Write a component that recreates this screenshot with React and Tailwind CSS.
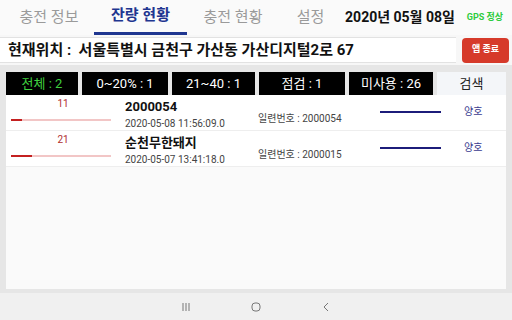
import React from "react";

const rows = [
  { pct: 11, name: "2000054", date: "2020-05-08 11:56:09.0", serial: "2000054" },
  { pct: 21, name: "순천무한돼지", date: "2020-05-07 13:41:18.0", serial: "2000015" },
];

export default function App() {
  return (
    <div
      className="w-[512px] h-[320px] flex flex-col bg-[#e6e6e6] overflow-hidden"
      style={{ fontFamily: 'Roboto, "Noto Sans CJK KR", sans-serif' }}
    >
      {/* top tabs */}
      <div className="h-[35px] bg-[#fafafa] flex items-stretch">
        <div className="w-[94px] flex items-center justify-center text-[15px] text-[#9a9a9a] pl-[4px]">충전 정보</div>
        <div className="w-[93px] flex flex-col items-center justify-end">
          <div className="text-[15px] font-bold text-[#1f3690] leading-none mb-[9px]">잔량 현황</div>
          <div className="w-full h-[3px] bg-[#1f3690]" />
        </div>
        <div className="w-[92px] flex items-center justify-center text-[15px] text-[#9a9a9a]">충전 현황</div>
        <div className="w-[63px] flex items-center justify-center text-[15px] text-[#9a9a9a]">설정</div>
        <div className="w-[116px] flex items-center justify-center text-[14px] font-bold text-[#111]">2020년 05월 08일</div>
        <div className="flex-1 flex items-center justify-center text-[9px] font-bold text-[#2ecc40]">GPS 정상</div>
      </div>
      {/* address */}
      <div className="h-[30px] bg-[#f7f7f7] flex items-center">
        <div className="w-[456px] h-[26px] bg-white border-y border-[#e2e2e2] flex items-center pl-[8px] text-[15px] font-bold text-[#111]">
          현재위치 :&nbsp; 서울특별시 금천구 가산동 가산디지털2로 67
        </div>
        <div className="ml-[6px] w-[47px] h-[25px] bg-[#d63a2a] rounded-[4px] flex items-center justify-center text-[9px] text-white font-bold">
          앱 종료
        </div>
      </div>
      {/* main */}
      <div className="flex-1 px-[6px] pt-[7px] pb-[4px] flex flex-col">
        <div className="flex-1 bg-[#fafafa] flex flex-col">
          <div className="h-[23px] flex gap-[4px] bg-[#e6e6e6]">
            <div className="w-[72px] bg-black text-[#3fcf3f] text-[13px] flex items-center justify-center">전체 : 2</div>
            <div className="w-[86px] bg-black text-white text-[13px] flex items-center justify-center">0~20% : 1</div>
            <div className="w-[83px] bg-black text-white text-[13px] flex items-center justify-center">21~40 : 1</div>
            <div className="w-[86px] bg-black text-white text-[13px] flex items-center justify-center">점검 : 1</div>
            <div className="w-[84px] bg-black text-white text-[13px] flex items-center justify-center">미사용 : 26</div>
            <div className="flex-1 bg-[#f4f6f9] text-[#222] text-[13px] flex items-center justify-center">검색</div>
          </div>
          {rows.map((r, i) => (
            <div key={i} className="h-[36px] bg-white border-b border-[#eeeeee] flex items-stretch">
              <div className="w-[114px] flex flex-col items-center pt-[3px]">
                <div className="text-[10px] text-[#b03030] leading-[12px]">{r.pct}</div>
                <div className="mt-[9px] w-[100px] h-[2px] bg-[#f2c6c6] ml-[-4px]">
                  <div className="h-full bg-[#c42020]" style={{ width: `${r.pct}%` }} />
                </div>
              </div>
              <div className="w-[133px] flex flex-col pl-[5px] pt-[4px]">
                <div className="text-[13px] font-bold text-[#111] leading-[15px]">{r.name}</div>
                <div className="text-[10px] text-[#444] leading-[12px] mt-[4px]">{r.date}</div>
              </div>
              <div className="w-[118px] flex items-end pb-[4px] text-[10px] text-[#444] pl-[5px]">일련번호 : {r.serial}</div>
              <div className="w-[88px] flex items-center pl-[9px]">
                <div className="w-[61px] h-[2px] bg-[#1c1c7a] mt-[-1px]" />
              </div>
              <div className="flex-1 flex items-center pl-[5px] text-[10px] text-[#3b3b8f] -mt-[2px]">양호</div>
            </div>
          ))}
        </div>
      </div>
      {/* nav bar */}
      <div className="h-[27px] bg-[#f0f0f0] flex items-center justify-center gap-[60px] text-[#777]">
        <svg width="10" height="10" viewBox="0 0 10 10"><path d="M2 1v8M5 1v8M8 1v8" stroke="#777" strokeWidth="1" /></svg>
        <svg width="10" height="10" viewBox="0 0 10 10"><rect x="1" y="1" width="8" height="8" rx="3" fill="none" stroke="#777" strokeWidth="1" /></svg>
        <svg width="10" height="10" viewBox="0 0 10 10"><path d="M7 1L3 5l4 4" fill="none" stroke="#777" strokeWidth="1" /></svg>
      </div>
    </div>
  );
}
